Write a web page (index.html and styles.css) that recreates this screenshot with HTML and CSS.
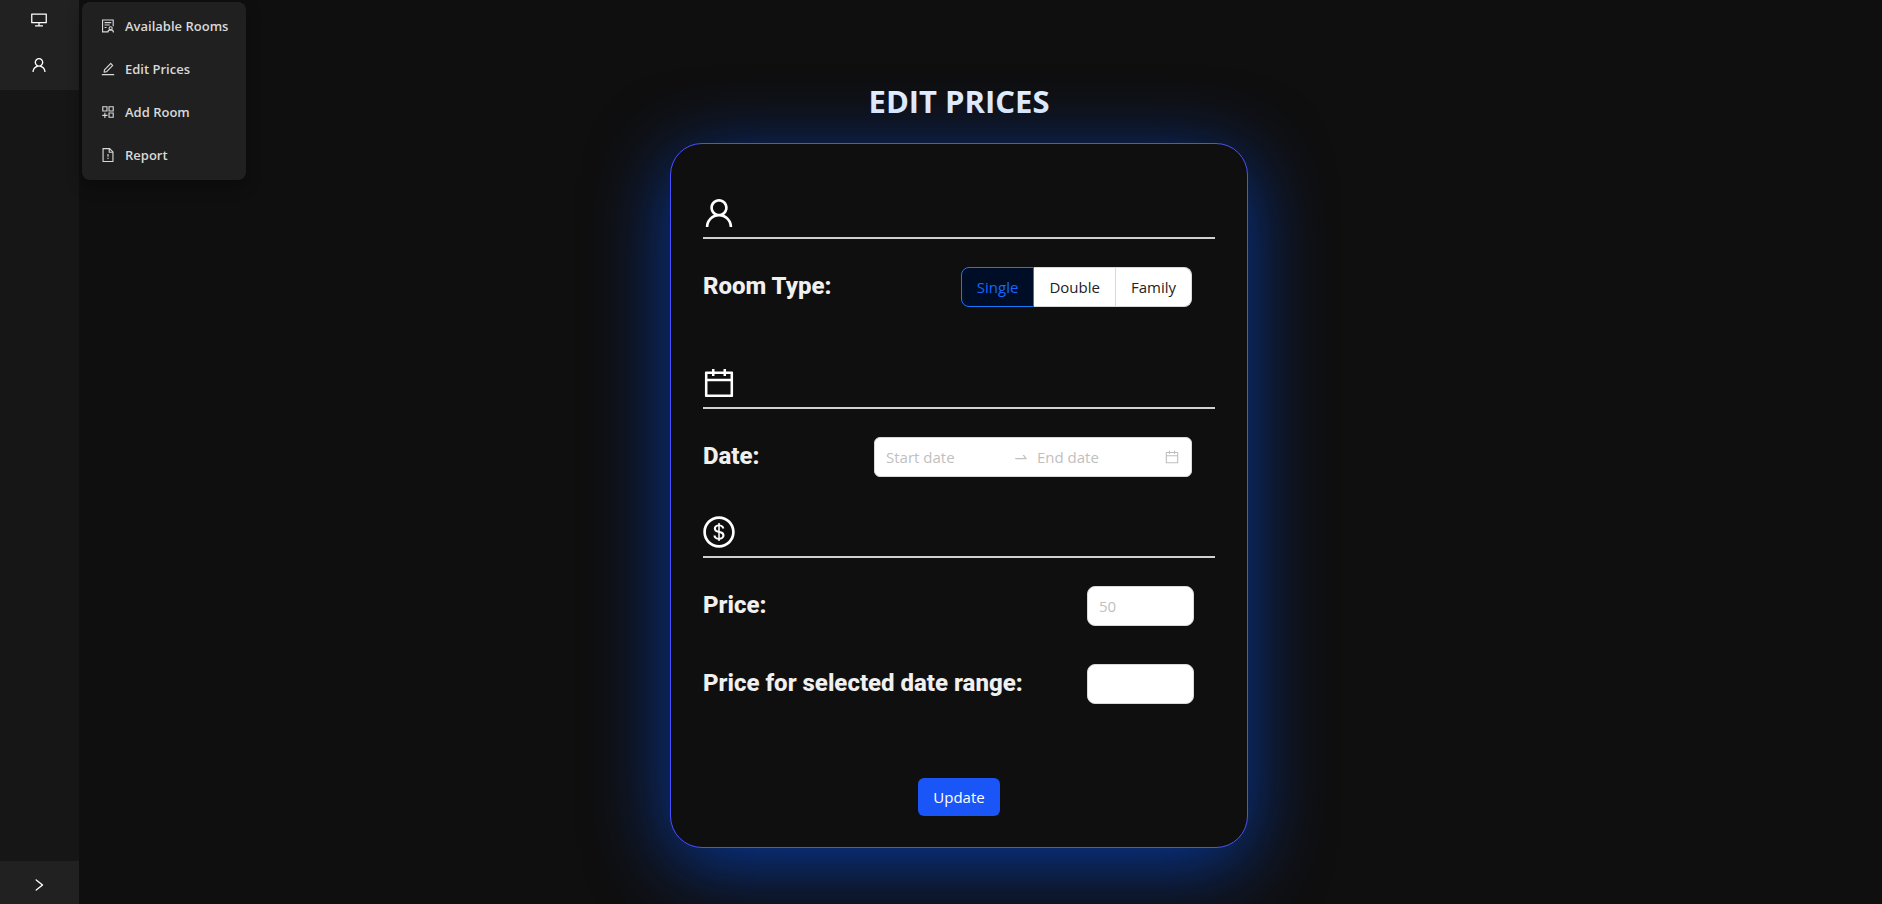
FILE: index.html
```html
<!DOCTYPE html>
<html lang="en">
<head>
<meta charset="utf-8">
<title>Edit Prices</title>
<link rel="stylesheet" href="styles.css">
</head>
<body>
<svg class="sprite" aria-hidden="true">
  <symbol id="user" viewBox="0 0 1024 1024"><path d="M858.5 763.6a374 374 0 00-80.6-119.5 375.63 375.63 0 00-119.5-80.6c-.4-.2-.8-.3-1.2-.5C719.5 518 760 444.7 760 362c0-137-111-248-248-248S264 225 264 362c0 82.7 40.5 156 102.8 201.1-.4.2-.8.3-1.2.5-44.8 18.9-85 46-119.5 80.6a375.63 375.63 0 00-80.6 119.5A371.7 371.7 0 00136 901.8a8 8 0 008 8.2h60c4.4 0 7.9-3.5 8-7.8 2-77.2 33-149.5 87.8-204.3 56.7-56.7 132-87.9 212.2-87.9s155.5 31.2 212.2 87.9C779 752.7 810 825 812 902.2c.1 4.4 3.6 7.8 8 7.8h60a8 8 0 008-8.2c-1-47.8-10.9-94.3-29.5-138.2zM512 534c-45.9 0-89.1-17.9-121.6-50.4S340 407.9 340 362c0-45.9 17.9-89.1 50.4-121.6S466.1 190 512 190s89.1 17.9 121.6 50.4S684 316.1 684 362c0 45.9-17.9 89.1-50.4 121.6S557.9 534 512 534z"/></symbol>
  <symbol id="calendar" viewBox="0 0 1024 1024"><path d="M880 184H712v-64c0-4.4-3.6-8-8-8h-56c-4.4 0-8 3.6-8 8v64H384v-64c0-4.4-3.6-8-8-8h-56c-4.4 0-8 3.6-8 8v64H144c-17.7 0-32 14.3-32 32v664c0 17.7 14.3 32 32 32h736c17.7 0 32-14.3 32-32V216c0-17.7-14.3-32-32-32zm-40 656H184V460h656v380zM184 392V256h128v48c0 4.4 3.6 8 8 8h56c4.4 0 8-3.6 8-8v-48h256v48c0 4.4 3.6 8 8 8h56c4.4 0 8-3.6 8-8v-48h128v136H184z"/></symbol>
</svg>
<div class="app">
  <aside class="sider">
    <nav class="rail">
      <button class="rail-item" type="button" aria-label="Rooms"><svg class="icon medium" viewBox="0 0 1024 1024"><path d="M928 140H96c-17.7 0-32 14.3-32 32v496c0 17.7 14.3 32 32 32h380v112H304c-8.8 0-16 7.2-16 16v48c0 4.4 3.6 8 8 8h432c4.4 0 8-3.6 8-8v-48c0-8.8-7.2-16-16-16H548V700h380c17.7 0 32-14.3 32-32V172c0-17.7-14.3-32-32-32zm-40 488H136V212h752v416z"/></svg></button>
      <button class="rail-item" type="button" aria-label="Account"><svg class="icon medium"><use href="#user"/></svg></button>
    </nav>
    <button class="trigger" type="button" aria-label="Expand menu"><svg class="icon" viewBox="0 0 1024 1024"><path d="M765.7 486.8L314.9 134.7A7.97 7.97 0 00302 141v77.3c0 4.9 2.3 9.6 6.1 12.6l360 281.1-360 281.1c-3.9 3-6.1 7.7-6.1 12.6V883c0 6.7 7.7 10.4 12.9 6.3l450.8-352.1a31.96 31.96 0 000-50.4z"/></svg></button>
    <nav class="submenu">
      <a class="submenu-item" href="#rooms"><svg class="icon line" viewBox="0 0 1024 1024"><path d="M480 884H164V124h680v400M290 292h430M290 450h330M290 608h130M500 930c0-90 60-170 180-170s180 80 180 170"/><circle cx="680" cy="660" r="100"/></svg>Available Rooms</a>
      <a class="submenu-item" href="#prices"><svg class="icon" viewBox="0 0 1024 1024"><path d="M257.7 752c2 0 4-.2 6-.5L431.9 722c2-.4 3.9-1.3 5.3-2.8l423.9-423.9a9.96 9.96 0 000-14.1L694.9 114.9c-1.9-1.9-4.4-2.9-7.1-2.9s-5.2 1-7.1 2.9L256.8 538.8c-1.5 1.5-2.4 3.3-2.8 5.3l-29.5 168.2a33.5 33.5 0 009.4 29.8c6.6 6.4 14.9 9.9 23.8 9.9zm67.4-174.4L687.8 215l73.3 73.3-362.7 362.6-88.9 15.7 15.6-89zM880 836H144c-17.7 0-32 14.3-32 32v36c0 4.4 3.6 8 8 8h784c4.4 0 8-3.6 8-8v-36c0-17.7-14.3-32-32-32z"/></svg>Edit Prices</a>
      <a class="submenu-item" href="#add"><svg class="icon line" viewBox="0 0 1024 1024"><path d="M178 178h268v268H178zM578 178h268v268H578zM578 578h268v268H578zM312 560v336M144 728h336"/></svg>Add Room</a>
      <a class="submenu-item" href="#report"><svg class="icon line" viewBox="0 0 1024 1024"><path d="M612 100H196v824h632V316zM590 100v236h238M512 440v190M512 690v80"/></svg>Report</a>
    </nav>
  </aside>
  <main class="content">
    <h1 class="title">EDIT PRICES</h1>
    <form class="card">
      <div class="divider"><svg class="icon large"><use href="#user"/></svg></div>
      <div class="row row-type" role="radiogroup" aria-labelledby="type-label">
        <span class="label" id="type-label">Room Type:</span>
        <span class="segments">
          <label class="segment"><input type="radio" name="room" checked>Single</label>
          <label class="segment"><input type="radio" name="room">Double</label>
          <label class="segment"><input type="radio" name="room">Family</label>
        </span>
      </div>
      <div class="divider"><svg class="icon large"><use href="#calendar"/></svg></div>
      <div class="row row-date">
        <label class="label" for="start">Date:</label>
        <span class="range">
          <input id="start" class="range-input" type="text" placeholder="Start date">
          <svg class="icon" viewBox="0 0 1024 1024"><path d="M873.1 596.2l-164-208A32 32 0 00684 376h-64.8c-6.7 0-10.4 7.7-6.3 13l144.3 183H152c-4.4 0-8 3.6-8 8v60c0 4.4 3.6 8 8 8h695.9c26.8 0 41.7-30.8 25.2-51.8z"/></svg>
          <input class="range-input" type="text" placeholder="End date" aria-label="End date">
          <svg class="icon"><use href="#calendar"/></svg>
        </span>
      </div>
      <div class="divider"><svg class="icon large" viewBox="0 0 1024 1024"><path d="M512 64C264.6 64 64 264.6 64 512s200.6 448 448 448 448-200.6 448-448S759.4 64 512 64zm0 820c-205.4 0-372-166.6-372-372s166.6-372 372-372 372 166.6 372 372-166.6 372-372 372zm47.7-395.2l-25.4-5.9V348.6c38 5.2 61.5 29 65.5 58.2.5 4 3.9 6.9 7.9 6.9h44.9c4.7 0 8.4-4.1 8-8.8-6.1-62.3-57.4-102.3-125.9-109.2V263c0-4.4-3.6-8-8-8h-28.1c-4.4 0-8 3.6-8 8v33c-70.8 6.9-126.2 46-126.2 119 0 67.6 49.8 100.2 102.1 112.7l24.7 6.3v142.7c-44.2-5.9-69-29.5-74.1-61.3-.6-3.8-4-6.6-7.9-6.6H363c-4.7 0-8.4 4-8 8.7 4.5 55 46.2 105.6 135.2 112.1V761c0 4.4 3.6 8 8 8h28.4c4.4 0 8-3.6 8-8.1l-.2-31.7c78.3-6.9 134.3-48.8 134.3-124-.1-69.4-44.2-100.4-109-116.4zm-68.6-16.2c-5.6-1.6-10.3-3.1-15-5-33.8-12.2-49.5-31.9-49.5-57.3 0-36.3 27.5-57 64.5-61.7v124zM534.3 677V543.3c3.1.9 5.9 1.6 8.8 2.2 47.3 14.4 63.2 34.4 63.2 65.1 0 39.1-29.4 62.6-72 66.4z"/></svg></div>
      <div class="row row-price">
        <label class="label" for="price">Price:</label>
        <input id="price" class="price" type="text" placeholder="50">
      </div>
      <div class="row row-price">
        <label class="label" for="range-price">Price for selected date range:</label>
        <input id="range-price" class="price" type="text">
      </div>
      <button class="submit" type="submit">Update</button>
    </form>
  </main>
</div>
</body>
</html>
```

FILE: styles.css
```css
* { box-sizing: border-box; }
body {
  margin: 0;
  background: #0f0f0f;
  color: #f0f0f0;
  font-family: "Open Sans", "Noto Sans", sans-serif;
  font-size: 15px;
}
button, input { font: inherit; }
.sprite { position: absolute; width: 0; height: 0; }
.icon { width: 16px; height: 16px; fill: currentColor; flex: none; }
.icon.medium { width: 18px; height: 18px; }
.icon.large { width: 36px; height: 36px; }
.icon.line { fill: none; stroke: currentColor; stroke-width: 72; }

.app { display: flex; min-height: 100vh; }
.sider {
  position: relative;
  display: flex;
  flex-direction: column;
  justify-content: space-between;
  width: 79px;
  background: #161616;
}
.rail { display: flex; flex-direction: column; background: #212121; }
.rail-item, .trigger {
  display: flex;
  align-items: center;
  justify-content: center;
  width: 100%;
  padding: 0 1px 0 0;
  border: 0;
  background: #212121;
  color: #fff;
}
.rail-item { height: 45px; padding-bottom: 5px; }
.trigger { height: 43px; padding-top: 4px; }
.submenu {
  position: absolute;
  top: 2px;
  left: 82px;
  z-index: 1;
  width: 164px;
  padding: 2px 4px 4px;
  border-radius: 8px;
  background: #202020;
  box-shadow: 0 6px 16px rgba(0, 0, 0, 0.3);
}
.submenu-item {
  display: flex;
  align-items: center;
  gap: 9px;
  height: 43px;
  padding-left: 14px;
  color: #d8d8d8;
  font-size: 13px;
  font-weight: 600;
  white-space: nowrap;
  text-decoration: none;
}

.content {
  flex: 1;
  display: flex;
  flex-direction: column;
  align-items: center;
  margin-right: 43px;
  padding: 80px 24px 48px;
}
.title { margin: 0 0 20px; color: #e6f1ff; font-size: 31px; line-height: 43px; font-weight: 700; }
.card {
  display: flex;
  flex-direction: column;
  width: 100%;
  max-width: 578px;
  padding: 48px 32px 31px;
  border: 1px solid #4b50ff;
  border-radius: 32px;
  background: #0f0f0f;
  box-shadow: 0 16px 80px 0 rgba(0, 85, 255, 0.6);
}
.divider {
  display: flex;
  align-items: center;
  height: 47px;
  padding-bottom: 4px;
  border-bottom: 2px solid #d0d0d0;
  color: #fff;
}
.divider .icon { margin-left: -2px; }
.row { display: flex; justify-content: space-between; padding: 28px 23px 0 0; }
.row-type { height: 123px; }
.row-date { height: 102px; }
.row-price { padding: 28px 21px 10px 0; }
.label { font-family: Roboto, sans-serif; font-size: 24px; line-height: 38px; font-weight: 800; }

.segments { display: flex; height: 40px; color: #222; }
.segment {
  display: flex;
  align-items: center;
  padding: 0 15px;
  border: 1px solid #d9d9d9;
  border-left: 0;
  background: #fff;
}
.segment input { position: absolute; opacity: 0; margin: 0; }
.segment:first-of-type { border-left: 1px solid; border-radius: 8px 0 0 8px; }
.segment:last-of-type { border-radius: 0 8px 8px 0; }
.segment:has(input:checked) { border-color: #1677ff; background: #000d26; color: #1668ff; }

.range, .price { height: 40px; border: 1px solid #d9d9d9; border-radius: 8px; background: #fff; }
.range { display: flex; align-items: center; width: 318px; padding: 0 11px; border-radius: 6px; color: #bfbfbf; gap: 8px; }
.range-input { flex: 1; min-width: 0; padding: 0; border: 0; background: none; color: #222; }
.price { width: 107px; padding: 0 11px; color: #222; }
input::placeholder { color: #bfbfbf; opacity: 1; }
.submit {
  align-self: center;
  height: 38px;
  margin-top: 64px;
  padding: 0 15px;
  border: 0;
  border-radius: 6px;
  background: #1955f7;
  color: #fff;
}
```
